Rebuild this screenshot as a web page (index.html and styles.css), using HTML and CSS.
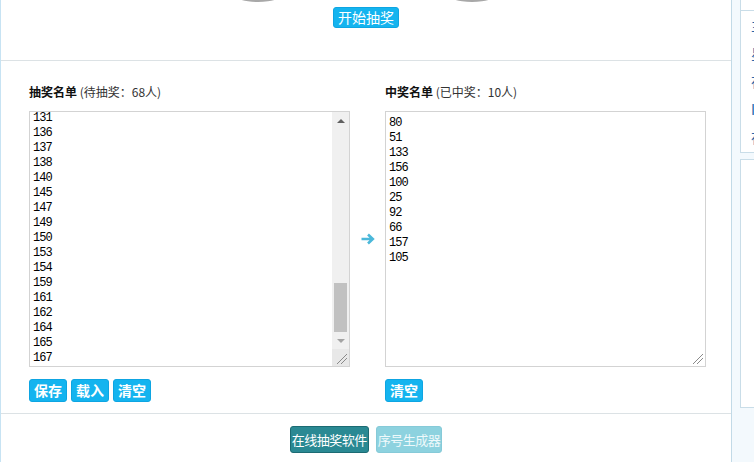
FILE: index.html
```html
<!DOCTYPE html>
<html lang="zh-CN">
<head>
    <meta charset="UTF-8">
    <meta name="viewport" content="width=device-width, initial-scale=1.0">
    <title>在线抽奖</title>
    <link rel="stylesheet" href="styles.css">
</head>
<body>
    <div class="page">
        <div class="main">
            <div class="draw-area">
                <svg class="wheels" viewBox="0 0 730 4">
                    <ellipse cx="257" cy="-7" rx="26" ry="9" fill="#a8a8a8"/>
                    <ellipse cx="471" cy="-7" rx="26" ry="9" fill="#a8a8a8"/>
                </svg>
                <button class="btn btn-blue btn-start">开始抽奖</button>
            </div>

            <div class="lists">
                <div class="list-col">
                    <div class="list-title"><b>抽奖名单</b> (待抽奖：68人)</div>
                    <div class="list-box">
                        <div class="list-text scrolled">
                            <div class="lines">131
136
137
138
140
145
147
149
150
153
154
159
161
162
164
165
167</div>
                        </div>
                        <div class="scrollbar">
                            <div class="sb-btn"><span class="tri-up"></span></div>
                            <div class="sb-track"><div class="sb-thumb"></div></div>
                            <div class="sb-btn"><span class="tri-down"></span></div>
                            <div class="sb-corner">
                                <svg width="17" height="17" viewBox="0 0 17 17"><path d="M5 15L15 5M9 15L15 9" stroke="#8a8a8a" stroke-width="1"/></svg>
                            </div>
                        </div>
                    </div>
                    <div class="list-btns">
                        <button class="btn btn-blue btn-small">保存</button>
                        <button class="btn btn-blue btn-small">载入</button>
                        <button class="btn btn-blue btn-small">清空</button>
                    </div>
                </div>

                <div class="list-arrow">
                    <svg width="14" height="12" viewBox="0 0 14 12">
                        <path d="M0.5 6H11.5M7 1.5L11.8 6L7 10.5" fill="none" stroke="#4bb8da" stroke-width="2.6"/>
                    </svg>
                </div>

                <div class="list-col">
                    <div class="list-title"><b>中奖名单</b> (已中奖：10人)</div>
                    <div class="list-box">
                        <div class="list-text winners">
                            <div class="lines">80
51
133
156
100
25
92
66
157
105</div>
                        </div>
                        <div class="grip">
                            <svg width="17" height="17" viewBox="0 0 17 17"><path d="M5 15L15 5M9 15L15 9" stroke="#8a8a8a" stroke-width="1"/></svg>
                        </div>
                    </div>
                    <div class="list-btns">
                        <button class="btn btn-blue btn-small">清空</button>
                    </div>
                </div>
            </div>

            <div class="tools">
                <button class="btn btn-teal">在线抽奖软件</button>
                <button class="btn btn-light">序号生成器</button>
            </div>
        </div>

        <div class="side">
            <div class="side-box box-nav">
                <div class="box-head"></div>
                <div class="nav-list">
                    <a href="#">主页推荐</a>
                    <a href="#">星座运势</a>
                    <a href="#">在线工具</a>
                    <a href="#">IP查询</a>
                    <a href="#">在线计算</a>
                </div>
            </div>
            <div class="side-box box-blank"></div>
        </div>
    </div>
</body>
</html>
```

FILE: styles.css
```css
body {
    margin: 0;
    overflow: hidden;
    font-family: "Noto Sans CJK SC", "Liberation Sans", sans-serif;
    font-size: 12px;
    color: #333;
    background: #fff;
}
.page {
    display: flex;
    width: 1000px;
    height: 462px;
}
.main {
    width: 730px;
    flex-shrink: 0;
    border-left: 1px solid #c7e3f3;
    border-right: 1px solid #c2dae7;
}

/* top area */
.draw-area {
    height: 60px;
    border-bottom: 1px solid #dce2e5;
    text-align: center;
}
.wheels {
    display: block;
    width: 730px;
    height: 4px;
}
.btn {
    font-family: "Noto Sans CJK SC", sans-serif;
    color: #fff;
    border-radius: 3px;
    padding: 0 4px;
    cursor: pointer;
}
.btn-blue {
    background: #14b4ef;
    border: 1px solid #0ea5e2;
    font-size: 14px;
}
.btn-start {
    margin-top: 3px;
    line-height: 19px;
}

/* the two lists */
.lists {
    display: flex;
    padding: 23px 0 11px 28px;
    border-bottom: 1px solid #dce2e5;
}
.list-col {
    width: 321px;
}
.list-title {
    line-height: 16px;
    margin-bottom: 11px;
    color: #333;
}
.list-title b {
    color: #111;
}
.list-box {
    height: 254px;
    border: 1px solid #d3d3d3;
    display: flex;
    background: #fff;
}
.list-text {
    flex: 1;
    overflow: hidden;
    padding-left: 3px;
    font-family: "Liberation Mono", monospace;
    font-size: 12px;
    line-height: 15px;
    letter-spacing: -1px;
    color: #000;
}
.lines {
    white-space: pre;
}
.scrolled .lines {
    margin-top: -1px;
}
.winners {
    padding-top: 4px;
}
.scrollbar {
    width: 17px;
    display: flex;
    flex-direction: column;
    background: #f0f0f0;
}
.sb-btn {
    height: 17px;
    display: flex;
    align-items: center;
    justify-content: center;
}
.tri-up {
    border-left: 4px solid transparent;
    border-right: 4px solid transparent;
    border-bottom: 4px solid #606060;
}
.tri-down {
    border-left: 4px solid transparent;
    border-right: 4px solid transparent;
    border-top: 4px solid #a3a3a3;
}
.sb-track {
    flex: 1;
    display: flex;
    flex-direction: column;
    justify-content: flex-end;
}
.sb-thumb {
    height: 49px;
    margin: 0 2px;
    background: #c1c1c1;
}
.sb-corner {
    height: 17px;
    background: #e8e8e8;
}
.sb-corner svg, .grip svg {
    display: block;
}
.grip {
    align-self: flex-end;
    width: 17px;
    height: 17px;
}
.list-btns {
    display: flex;
    gap: 4px;
    margin-top: 12px;
}
.btn-small {
    line-height: 21px;
    font-weight: bold;
}
.list-arrow {
    width: 35px;
    height: 256px;
    margin-top: 27px;
    display: flex;
    align-items: center;
    justify-content: center;
}

/* bottom tools */
.tools {
    display: flex;
    justify-content: center;
    gap: 7px;
    padding-top: 12px;
}
.tools .btn {
    font-size: 13px;
    line-height: 25px;
    padding: 0 1px;
    letter-spacing: -0.5px;
}
.btn-teal {
    background: #2a8993;
    border: 1px solid #1c6b73;
}
.btn-light {
    background: #8dd2df;
    border: 1px solid #86cad8;
    color: #eef9fb;
}

/* right column */
.side {
    flex: 1;
    background: #f3f9fd;
    padding-left: 8px;
}
.side-box {
    background: #fff;
    border: 1px solid #c9dde8;
    border-right: none;
}
.box-nav {
    border-top: none;
    padding-bottom: 1px;
}
.box-head {
    height: 10px;
    border-bottom: 1px solid #c9dde8;
}
.nav-list a {
    display: block;
    line-height: 28px;
    padding-left: 10px;
    font-size: 14px;
    color: #2266aa;
    text-decoration: none;
}
.box-blank {
    margin-top: 6px;
    height: 247px;
}
```
